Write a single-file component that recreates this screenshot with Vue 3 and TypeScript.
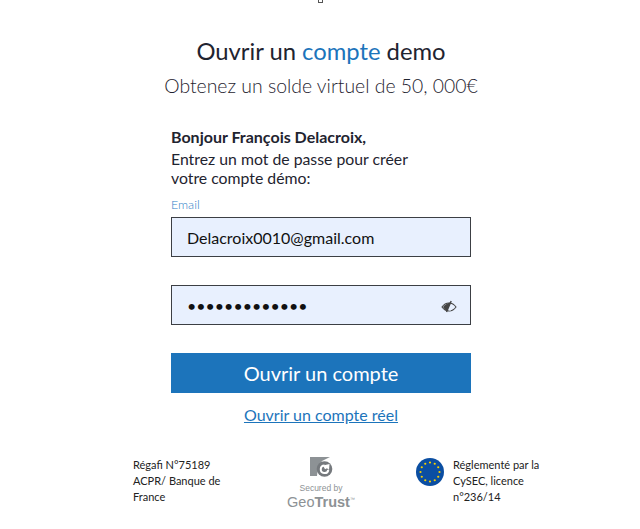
<script setup lang="ts">
const stars = Array.from({ length: 12 }, (_, i) => {
  const a = (i * Math.PI) / 6
  return { x: 16 + 9.5 * Math.sin(a), y: 16 - 9.5 * Math.cos(a) }
})
</script>

<template>
  <div class="page">
    <div class="top-mark"></div>
    <h1 class="title">Ouvrir un <span class="accent">compte</span> demo</h1>
    <p class="subtitle">Obtenez un solde virtuel de 50, 000€</p>

    <form class="form" @submit.prevent>
      <p class="hello">Bonjour François Delacroix,</p>
      <p class="intro">Entrez un mot de passe pour créer<br />votre compte démo:</p>

      <label class="label" for="email">Email</label>
      <input id="email" class="field" type="text" value="Delacroix0010@gmail.com" />

      <div class="password">
        <input class="field pass-input" type="password" value="Delacroix0010" />
        <svg class="eye" width="16" height="14" viewBox="0 0 16 14" fill="none">
          <path d="M1 8c1.800-2.600 4-4 7-4s5.200 1.400 7 4c-1.800 2.600-4 4-7 4s-5.200-1.400-7-4z" stroke="#444" stroke-width="1.100" />
          <path d="M2 8C4 5.500 7 4 9.500 3.500L6 12C4.500 11 3 10 2 8z" fill="#444" />
          <path d="M10.200 2 5.500 13" stroke="#444" stroke-width="1.400" />
          <path d="M8.500 11.500C10 11 11.500 10 12 8" stroke="#e8f0fe" />
        </svg>
      </div>

      <button class="submit" type="submit">Ouvrir un compte</button>
      <a class="real-link" href="#">Ouvrir un compte réel</a>
    </form>

    <footer class="footer">
      <p class="small">Régafi N°75189<br />ACPR/ Banque de<br />France</p>
      <div class="geotrust">
        <svg class="geo-logo" width="24" height="20" viewBox="0 0 24 20">
          <path d="M1 0h20l-8 4-4 6-1 9H1z" fill="#8d9295" />
          <circle cx="15.500" cy="12" r="7.800" fill="#75797d" />
          <path d="M15.500 8.500a3.800 3.800 0 1 0 3.800 4.500" fill="none" stroke="#fff" stroke-width="2" />
          <path d="M14 8.500 20.500 7l-.5 6-2-1.800-2 1z" fill="#fff" />
        </svg>
        <span class="secured">Secured by</span>
        <span class="brand">Geo<b>Trust</b><sup>™</sup></span>
      </div>
      <div class="cysec">
        <svg class="flag" width="32" height="32" viewBox="0 0 32 32">
          <circle cx="16" cy="16" r="14" fill="#0b4ea2" />
          <circle v-for="(s, i) in stars" :key="i" :cx="s.x" :cy="s.y" r="1.100" fill="#f7d000" />
        </svg>
        <p class="small">Réglementé par la<br />CySEC, licence<br />n°236/14</p>
      </div>
    </footer>
  </div>
</template>

<style scoped>
.page {
  width: 640px;
  height: 529px;
  box-sizing: border-box;
  overflow: hidden;
  padding: 37px 0 0 2px;
  position: relative;
  font-family: Lato, "Liberation Sans", sans-serif;
  color: #1f2430;
  text-align: center;
}

.top-mark {
  position: absolute;
  top: -2px;
  left: 318px;
  width: 3px;
  height: 3px;
  border: 1px solid #555;
}

.title {
  margin: 0;
  font-size: 23.800px;
  line-height: 29px;
  font-weight: 400;
}

.accent {
  color: #1c74bb;
}

.subtitle {
  margin: 5px 0 0;
  font-size: 19.400px;
  line-height: 30px;
  font-weight: 300;
}

.form {
  width: 300px;
  margin: 26px auto 0;
  display: flex;
  flex-direction: column;
  text-align: left;
}

.hello {
  margin: 0;
  font-size: 16px;
  line-height: 20px;
  font-weight: 700;
}

.intro {
  margin: 2px 0 0;
  font-size: 15.800px;
  line-height: 19px;
}

.label {
  margin-top: 11px;
  font-size: 12.500px;
  line-height: 14px;
  font-weight: 300;
  color: #2f80c8;
}

.field {
  box-sizing: border-box;
  width: 300px;
  height: 40px;
  margin: 5px 0 0;
  padding: 0 15px;
  border: 1px solid #3c3f44;
  background: #e8f0fe;
  font-family: inherit;
  font-size: 16px;
  color: #111;
  outline: none;
}

.password {
  position: relative;
  margin-top: 28px;
}

.pass-input {
  display: block;
  margin: 0;
}

.eye {
  position: absolute;
  top: 14px;
  right: 14px;
}

.submit {
  height: 40px;
  margin-top: 28px;
  border: none;
  background: #1c74bb;
  color: #fff;
  font-family: inherit;
  font-size: 20px;
  cursor: pointer;
}

.real-link {
  margin-top: 11px;
  align-self: center;
  font-size: 16px;
  line-height: 22px;
  color: #1c74bb;
}

.footer {
  width: 420px;
  margin: 31px 0 0 131px;
  display: grid;
  grid-template-columns: 95px 186px 1fr;
  text-align: left;
}

.small {
  margin: 0;
  font-size: 11px;
  line-height: 16px;
  color: #222;
}

.geotrust {
  display: flex;
  flex-direction: column;
  align-items: center;
  color: #8d9295;
}

.secured {
  font-family: "Liberation Sans", sans-serif;
  font-size: 8.500px;
  line-height: 10px;
  margin-top: 6px;
}

.brand {
  font-family: "Liberation Sans", sans-serif;
  font-size: 14.500px;
  line-height: 16px;
  margin-top: -2px;
}

.brand sup {
  font-size: 5px;
}

.cysec {
  display: flex;
  gap: 7px;
}

.flag {
  flex-shrink: 0;
  margin-top: -1px;
}
</style>
